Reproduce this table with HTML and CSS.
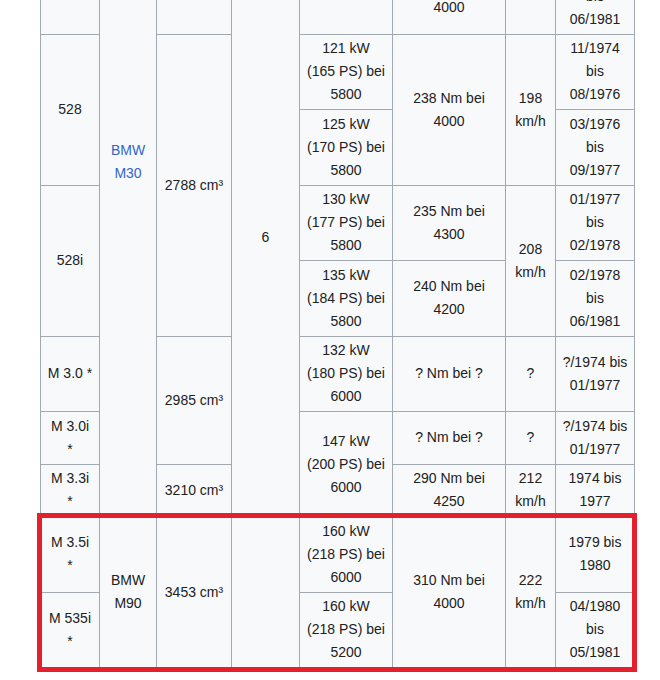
FILE: index.html
```html
<!DOCTYPE html>
<html lang="de">
<head>
<meta charset="utf-8">
<title>BMW E12 Motoren</title>
<link rel="stylesheet" href="styles.css">
</head>
<body>
<div class="scroller">
  <div class="table-wrap">
    <table class="wikitable">
      <colgroup>
        <col class="c-model"><col class="c-motor"><col class="c-hub"><col class="c-zyl">
        <col class="c-leist"><col class="c-dreh"><col class="c-vmax"><col class="c-bau">
      </colgroup>
      <tbody>
        <tr>
          <td rowspan="3">525</td>
          <td rowspan="10"><a href="#" class="link">BMW<br>M30</a></td>
          <td rowspan="3">2494 cm³</td>
          <td rowspan="12">6</td>
          <td>107 kW<br>(145 PS) bei<br>6000</td>
          <td>208 Nm bei<br>4000</td>
          <td>190<br>km/h</td>
          <td>04/1973<br>bis<br>08/1976</td>
        </tr>
        <tr>
          <td rowspan="2">110 kW<br>(150 PS) bei<br>5800</td>
          <td>206 Nm bei<br>4000</td>
          <td rowspan="2">196<br>km/h</td>
          <td>09/1976<br>bis<br>08/1979</td>
        </tr>
        <tr>
          <td>208 Nm bei<br>4000</td>
          <td>09/1979<br>bis<br>06/1981</td>
        </tr>
        <tr>
          <td rowspan="2">528</td>
          <td rowspan="4">2788 cm³</td>
          <td>121 kW<br>(165 PS) bei<br>5800</td>
          <td rowspan="2">238 Nm bei<br>4000</td>
          <td rowspan="2">198<br>km/h</td>
          <td>11/1974<br>bis<br>08/1976</td>
        </tr>
        <tr>
          <td>125 kW<br>(170 PS) bei<br>5800</td>
          <td>03/1976<br>bis<br>09/1977</td>
        </tr>
        <tr>
          <td rowspan="2">528i</td>
          <td>130 kW<br>(177 PS) bei<br>5800</td>
          <td>235 Nm bei<br>4300</td>
          <td rowspan="2">208<br>km/h</td>
          <td>01/1977<br>bis<br>02/1978</td>
        </tr>
        <tr>
          <td>135 kW<br>(184 PS) bei<br>5800</td>
          <td>240 Nm bei<br>4200</td>
          <td>02/1978<br>bis<br>06/1981</td>
        </tr>
        <tr>
          <td>M 3.0 *</td>
          <td rowspan="2">2985 cm³</td>
          <td>132 kW<br>(180 PS) bei<br>6000</td>
          <td>? Nm bei ?</td>
          <td>?</td>
          <td>?/1974 bis<br>01/1977</td>
        </tr>
        <tr>
          <td>M 3.0i<br>*</td>
          <td rowspan="2">147 kW<br>(200 PS) bei<br>6000</td>
          <td>? Nm bei ?</td>
          <td>?</td>
          <td>?/1974 bis<br>01/1977</td>
        </tr>
        <tr>
          <td>M 3.3i<br>*</td>
          <td>3210 cm³</td>
          <td>290 Nm bei<br>4250</td>
          <td>212<br>km/h</td>
          <td>1974 bis<br>1977</td>
        </tr>
        <tr>
          <td>M 3.5i<br>*</td>
          <td rowspan="2">BMW<br>M90</td>
          <td rowspan="2">3453 cm³</td>
          <td>160 kW<br>(218 PS) bei<br>6000</td>
          <td rowspan="2">310 Nm bei<br>4000</td>
          <td rowspan="2">222<br>km/h</td>
          <td>1979 bis<br>1980</td>
        </tr>
        <tr>
          <td>M 535i<br>*</td>
          <td>160 kW<br>(218 PS) bei<br>5200</td>
          <td>04/1980<br>bis<br>05/1981</td>
        </tr>
      </tbody>
    </table>
    <div class="highlight"></div>
  </div>
</div>
</body>
</html>
```

FILE: styles.css
```css
html, body {
  margin: 0;
  padding: 0;
  background: #ffffff;
}

.scroller {
  overflow: hidden;
  height: 680px;
}

.table-wrap {
  position: relative;
  margin: -193px 0 0 40px;
  width: 595px;
}

.wikitable {
  width: 595px;
  table-layout: fixed;
  border-collapse: collapse;
  background: #f8f9fa;
  color: #202122;
  font-family: "Liberation Sans", Arial, sans-serif;
  font-size: 14px;
  line-height: 23px;
}

.wikitable td {
  border: 1px solid #a2a9b1;
  padding: 2.75px 5.6px;
  text-align: center;
  vertical-align: middle;
}

.c-model { width: 59px; }
.c-motor { width: 57px; }
.c-hub { width: 75px; }
.c-zyl { width: 68px; }
.c-leist { width: 93px; }
.c-dreh { width: 113px; }
.c-vmax { width: 50px; }
.c-bau { width: 79px; }

.link {
  color: #3366cc;
  text-decoration: none;
}

.highlight {
  position: absolute;
  left: -3px;
  top: 706px;
  width: 590px;
  height: 149px;
  border: 5px solid #e3202b;
  pointer-events: none;
}
```
